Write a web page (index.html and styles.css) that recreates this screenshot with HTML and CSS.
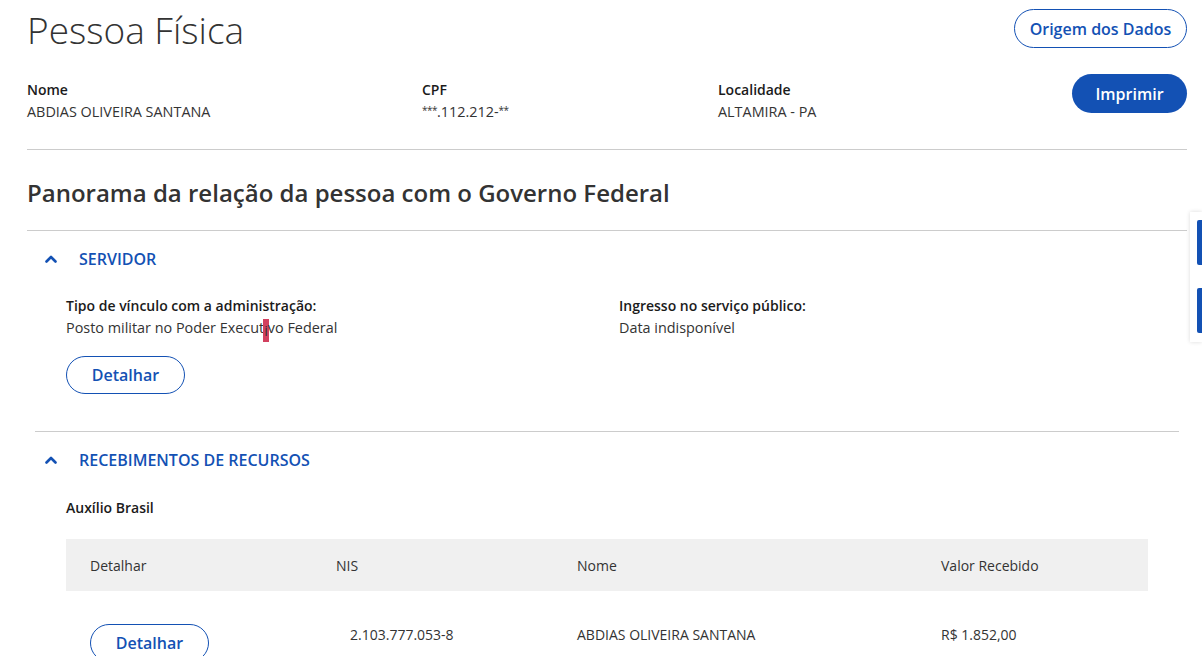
FILE: index.html
```html
<!DOCTYPE html>
<html lang="pt-BR">
<head>
<meta charset="utf-8">
<title>Pessoa Física</title>
<link rel="stylesheet" href="styles.css">
</head>
<body>
<main class="page">
  <header class="top">
    <h1 class="title">Pessoa Física</h1>
    <button class="btn btn-outline btn-lg">Origem dos Dados</button>
  </header>

  <section class="ident">
    <div class="field f-nome">
      <div class="label">Nome</div>
      <div class="value">ABDIAS OLIVEIRA SANTANA</div>
    </div>
    <div class="field f-cpf">
      <div class="label">CPF</div>
      <div class="value"><span class="ast">***</span>.112.212-<span class="ast">**</span></div>
    </div>
    <div class="field f-loc">
      <div class="label">Localidade</div>
      <div class="value">ALTAMIRA - PA</div>
    </div>
    <button class="btn btn-primary btn-lg">Imprimir</button>
  </section>

  <h2 class="panorama">Panorama da relação da pessoa com o Governo Federal</h2>

  <section class="acc acc-first">
    <div class="acc-head">
      <svg class="chev" width="12" height="8" viewBox="0 0 12 8"><path d="M1.5 6.5 L6 2 L10.5 6.5" fill="none" stroke="#1351b4" stroke-width="2.6" stroke-linecap="round" stroke-linejoin="round"/></svg>
      <span>SERVIDOR</span>
    </div>
    <div class="acc-body">
      <div class="pair">
        <div class="field w-vinc">
          <div class="label">Tipo de vínculo com a administração:</div>
          <div class="value">Posto militar no Poder Execut<span class="mark">i</span>vo Federal</div>
        </div>
        <div class="field">
          <div class="label">Ingresso no serviço público:</div>
          <div class="value">Data indisponível</div>
        </div>
      </div>
      <button class="btn btn-outline btn-md">Detalhar</button>
    </div>
  </section>

  <section class="acc acc-second">
    <div class="acc-head">
      <svg class="chev" width="12" height="8" viewBox="0 0 12 8"><path d="M1.5 6.5 L6 2 L10.5 6.5" fill="none" stroke="#1351b4" stroke-width="2.6" stroke-linecap="round" stroke-linejoin="round"/></svg>
      <span>RECEBIMENTOS DE RECURSOS</span>
    </div>
    <div class="acc-body">
      <div class="label sub">Auxílio Brasil</div>
      <table class="tbl">
        <thead>
          <tr><th class="c1">Detalhar</th><th class="c2">NIS</th><th class="c3">Nome</th><th class="c4">Valor Recebido</th></tr>
        </thead>
        <tbody>
          <tr>
            <td class="c1"><button class="btn btn-outline btn-md">Detalhar</button></td>
            <td class="c2">2.103.777.053-8</td>
            <td class="c3">ABDIAS OLIVEIRA SANTANA</td>
            <td class="c4">R$ 1.852,00</td>
          </tr>
        </tbody>
      </table>
    </div>
  </section>
</main>

<aside class="sidetabs">
  <div class="tab"></div>
  <div class="tab"></div>
</aside>
</body>
</html>
```

FILE: styles.css
```css
* { box-sizing: border-box; }
html, body { margin: 0; padding: 0; background: #fff; }
body {
  font-family: "Open Sans", "Noto Sans", sans-serif;
  color: #333;
  overflow: hidden;
  height: 656px;
}
.page { padding: 0 15px 0 27px; width: 1202px; }

.top {
  display: flex;
  justify-content: space-between;
  align-items: flex-start;
  padding-top: 9px;
}
.title {
  margin: 0;
  font-weight: 300;
  font-size: 37px;
  line-height: 42px;
  color: #333;
}

.btn {
  font-family: inherit;
  font-weight: 600;
  border-radius: 100px;
  cursor: pointer;
  background: #fff;
  padding: 0;
}
.btn-lg { height: 39px; font-size: 16px; }
.btn-outline { border: 1px solid #1351b4; color: #1351b4; }
.top .btn-lg { width: 173px; }
.btn-primary { background: #1351b4; color: #fff; border: none; width: 115px; }
.btn-md { height: 38px; width: 119px; font-size: 16px; }

.ident {
  display: flex;
  align-items: flex-start;
  margin-top: 23px;
  border-bottom: 1px solid #ccc;
  height: 76px;
}
.label {
  font-weight: 600;
  font-size: 14px;
  line-height: 20px;
  color: #1b1b1b;
}
.field .value {
  font-size: 14.4px;
  line-height: 20px;
  margin-top: 2px;
  color: #333;
}
.ast { font-size: 10px; vertical-align: 3px; line-height: 0; letter-spacing: -0.5px; }
.ident .field { padding-top: 6px; }
.f-nome { width: 395px; }
.f-cpf { width: 296px; }
.f-loc { flex: 1; }

.panorama {
  margin: 0;
  font-size: 24px;
  font-weight: 600;
  line-height: 30px;
  color: #333;
  padding: 28px 0 22px;
  border-bottom: 1px solid #ccc;
}

.acc-head {
  display: flex;
  align-items: center;
  color: #1351b4;
  font-size: 16px;
  font-weight: 600;
  height: 56px;
}
.chev { margin-left: 18px; margin-right: 22px; }

.acc-body { padding-left: 39px; }
.pair { display: flex; padding-top: 9px; }
.w-vinc { width: 553px; }
.acc-first .btn-md { margin-top: 14px; }
.acc-first { padding-bottom: 37px; }

.mark {
  display: inline-block;
  background: #d2405f;
  line-height: 23px;
  padding: 0 1.5px;
  margin: 0 -1.5px;
  vertical-align: -3px;
}

.acc-second { border-top: 1px solid #ccc; margin: 0 8px; }
.acc-second .chev { margin-left: 10px; }
.acc-second .acc-body { padding-left: 31px; }
.sub { padding-top: 10px; }

.tbl {
  border-collapse: collapse;
  width: 1082px;
  margin-top: 21px;
  font-size: 14px;
}
.tbl th {
  background: #f0f0f0;
  font-weight: 400;
  text-align: left;
  height: 52px;
  padding: 0;
  color: #333;
}
.tbl td {
  vertical-align: top;
  padding: 34px 0 0;
  line-height: 20px;
}
.tbl .c1 { width: 270px; padding-left: 24px; }
.tbl td.c1 { padding-top: 33px; }
.tbl .c2 { width: 241px; }
.tbl td.c2 { padding-left: 14px; }
.tbl .c3 { width: 364px; }

.sidetabs {
  position: fixed;
  right: 0;
  top: 212px;
  width: 12px;
  height: 130px;
  background: #fff;
  box-shadow: 0 0 4px rgba(0,0,0,0.15);
  padding: 8px 0 0 7px;
  display: flex;
  flex-direction: column;
  gap: 23px;
}
.tab { width: 5px; height: 45px; background: #1351b4; border-radius: 2px 0 0 2px; }
```
